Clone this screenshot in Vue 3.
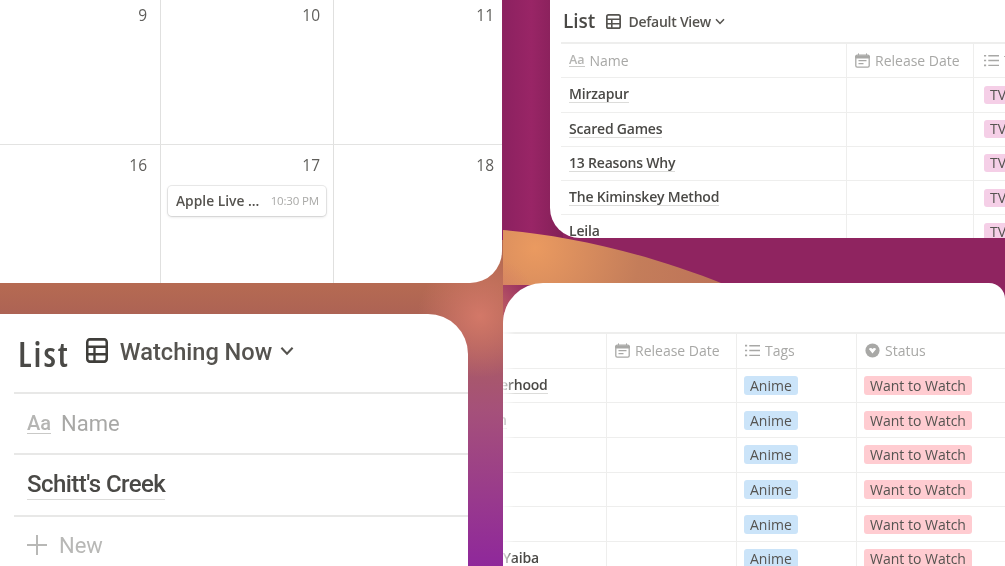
<script setup>
const weeks = [
  [{ n: 9 }, { n: 10 }, { n: 11 }],
  [{ n: 16 }, { n: 17, event: { title: 'Apple Live ...', time: '10:30 PM' } }, { n: 18 }]
]
const shows = ['Mirzapur', 'Scared Games', '13 Reasons Why', 'The Kiminskey Method', 'Leila']
const anime = [
  { name: 'Fullmetal Alchemist: Brotherhood', shift: 0 },
  { name: 'Tengen Toppa Gurren Lagann', shift: -14 },
  { name: 'Death Note', shift: 0 },
  { name: 'One Piece', shift: 0 },
  { name: 'Naruto', shift: 0 },
  { name: 'Demon Slayer: Kimetsu no Yaiba', shift: 0 }
]
</script>

<template>
  <div class="canvas">
    <svg class="sprite" width="0" height="0">
      <symbol id="i-table" viewBox="0 0 14 14" preserveAspectRatio="none">
        <rect x="0.8" y="0.8" width="12.4" height="12.4" rx="1.6" fill="none" stroke="currentColor" stroke-width="1.6" />
        <path d="M0.8 4.9H13.2M0.8 9.1H13.2M5.4 4.9V13.2" fill="none" stroke="currentColor" stroke-width="1.5" />
      </symbol>
      <symbol id="i-chev" viewBox="0 0 10 7">
        <path d="M1 1.2L5 5.4L9 1.2" fill="none" stroke="currentColor" stroke-width="1.5" />
      </symbol>
      <symbol id="i-cal" viewBox="0 0 15 15">
        <rect x="0.8" y="2.2" width="13.4" height="12" rx="1.4" fill="none" stroke="currentColor" stroke-width="1.3" />
        <path d="M0.8 3H14.2V5H0.8ZM3.5 0.4V2.5M11.5 0.4V2.5" fill="currentColor" stroke="currentColor" stroke-width="1" />
        <path d="M3.5 7.6H11.5M3.5 10.6H8.5" fill="none" stroke="currentColor" stroke-width="1.2" />
      </symbol>
      <symbol id="i-list" viewBox="0 0 14 12">
        <path d="M4 1.5H14M4 6H14M4 10.5H14" fill="none" stroke="currentColor" stroke-width="1.3" />
        <path d="M0 1.5H2M0 6H2M0 10.5H2" fill="none" stroke="currentColor" stroke-width="1.5" />
      </symbol>
      <symbol id="i-status" viewBox="0 0 14 14">
        <circle cx="7" cy="7" r="6.6" fill="currentColor" />
        <path d="M3.6 5.6C4.6 4.4 6.2 4.6 7 5.5C7.8 4.6 9.4 4.4 10.4 5.6L7 9.8Z" fill="#fff" />
      </symbol>
      <symbol id="i-plus" viewBox="0 0 20 20">
        <path d="M10 0V20M0 10H20" fill="none" stroke="currentColor" stroke-width="2" />
      </symbol>
    </svg>

    <svg class="backdrop" viewBox="0 0 1005 566" width="1005" height="566">
      <defs>
        <linearGradient id="warm" gradientUnits="userSpaceOnUse" x1="0" y1="285" x2="0" y2="566">
          <stop offset="0" stop-color="#b56a52" />
          <stop offset="0.1" stop-color="#ad6354" />
          <stop offset="0.45" stop-color="#a5507a" />
          <stop offset="1" stop-color="#8f289b" />
        </linearGradient>
        <linearGradient id="plum" gradientUnits="userSpaceOnUse" x1="503" y1="0" x2="560" y2="0">
          <stop offset="0" stop-color="#8c2160" />
          <stop offset="0.5" stop-color="#992566" />
          <stop offset="1" stop-color="#842058" />
        </linearGradient>
        <radialGradient id="amber" gradientUnits="userSpaceOnUse" cx="535" cy="248" r="210">
          <stop offset="0" stop-color="#ea9a60" />
          <stop offset="0.5" stop-color="#c47d5a" />
          <stop offset="1" stop-color="#bb7058" />
        </radialGradient>
        <radialGradient id="glow" gradientUnits="userSpaceOnUse" cx="480" cy="316" r="62">
          <stop offset="0" stop-color="#d37868" />
          <stop offset="1" stop-color="#d37868" stop-opacity="0" />
        </radialGradient>
      </defs>
      <rect width="1005" height="566" fill="#8f2460" />
      <rect x="503" width="60" height="240" fill="url(#plum)" />
      <rect y="240" width="503" height="326" fill="url(#warm)" />
      <path d="M503 230C560 235 640 250 726 285H503Z" fill="url(#amber)" />
      <rect x="400" y="240" width="150" height="150" fill="url(#glow)" />
    </svg>

    <section class="window calendar">
      <div class="weeks">
        <div v-for="(week, i) in weeks" :key="i" class="week">
          <div v-for="day in week" :key="day.n" class="day">
            <span class="num">{{ day.n }}</span>
            <div v-if="day.event" class="event">
              <span class="ev-title">{{ day.event.title }}</span>
              <span class="ev-time">{{ day.event.time }}</span>
            </div>
          </div>
        </div>
      </div>
    </section>

    <section class="window shows">
      <header class="bar">
        <h2 class="title">List</h2>
        <svg class="tbl-ico"><use href="#i-table" /></svg>
        <span class="view">Default View</span>
        <svg class="chev"><use href="#i-chev" /></svg>
      </header>
      <div class="table">
        <div class="row head">
          <div class="cell"><span class="aa">Aa</span>Name</div>
          <div class="cell"><svg class="ico"><use href="#i-cal" /></svg>Release Date</div>
          <div class="cell"><svg class="ico"><use href="#i-list" /></svg>Tags</div>
        </div>
        <div v-for="s in shows" :key="s" class="row">
          <div class="cell"><span class="name">{{ s }}</span></div>
          <div class="cell"></div>
          <div class="cell"><span class="pill pink">TV Series</span></div>
        </div>
      </div>
    </section>

    <section class="window watching">
      <header class="bar">
        <h2 class="title">List</h2>
        <svg class="tbl-ico"><use href="#i-table" /></svg>
        <span class="view">Watching Now</span>
        <svg class="chev"><use href="#i-chev" /></svg>
      </header>
      <div class="table">
        <div class="row head">
          <div class="cell"><span class="aa">Aa</span>Name</div>
        </div>
        <div class="row">
          <div class="cell"><span class="name">Schitt's Creek</span></div>
        </div>
        <div class="new">
          <svg class="plus"><use href="#i-plus" /></svg>New
        </div>
      </div>
    </section>

    <section class="window anime">
      <div class="spacer"></div>
      <div class="table">
        <div class="row head">
          <div class="cell"><span class="aa">Aa</span>Name</div>
          <div class="cell"><svg class="ico"><use href="#i-cal" /></svg>Release Date</div>
          <div class="cell"><svg class="ico"><use href="#i-list" /></svg>Tags</div>
          <div class="cell"><svg class="ico"><use href="#i-status" /></svg>Status</div>
        </div>
        <div v-for="a in anime" :key="a.name" class="row">
          <div class="cell"><span class="name" :style="{ marginLeft: a.shift + 'px' }">{{ a.name }}</span></div>
          <div class="cell"></div>
          <div class="cell"><span class="pill blue">Anime</span></div>
          <div class="cell"><span class="pill red">Want to Watch</span></div>
        </div>
      </div>
    </section>
  </div>
</template>

<style scoped>
.canvas {
  position: relative;
  width: 1005px;
  height: 566px;
  overflow: hidden;
  font-family: "Open Sans", "Noto Sans", sans-serif;
  color: #37352f;
}
.sprite { position: absolute; }
.backdrop { position: absolute; inset: 0; display: block; }

.window {
  position: absolute;
  background: #fff;
  overflow: hidden;
  filter: blur(0.5px);
}
.calendar { left: 0; top: 0; width: 502px; height: 283px; border-bottom-right-radius: 32px; }
.shows { left: 550px; top: 0; width: 455px; height: 238px; border-bottom-left-radius: 30px; }
.watching { left: 0; top: 314px; width: 468px; height: 252px; border-top-right-radius: 40px; font-family: Roboto, "Open Sans", sans-serif; }
.anime { left: 503px; top: 283px; width: 502px; height: 283px; border-top-left-radius: 40px; border-top-right-radius: 16px; }
.anime::before {
  content: "";
  position: absolute;
  left: 0;
  top: 0;
  bottom: 0;
  width: 12px;
  z-index: 1;
  background: linear-gradient(to right, rgba(255, 255, 255, 0.85), rgba(255, 255, 255, 0));
}

/* calendar */
.weeks { margin: -5px 0 0 -12px; }
.week {
  display: grid;
  grid-template-columns: repeat(3, 173px);
  height: 149px;
  border-bottom: 1px solid #e3e3e2;
}
.week + .week { height: 160px; }
.day {
  display: flex;
  flex-direction: column;
  border-right: 1px solid #e0e0df;
  padding: 8px 13px 0 7px;
  box-sizing: border-box;
}
.day:last-child { border-right: 0; }
.num {
  align-self: flex-end;
  font-size: 15.5px;
  line-height: 24px;
  color: #5f5e5b;
}
.event {
  display: flex;
  align-items: center;
  justify-content: space-between;
  height: 30px;
  margin: 8.5px -6px 0 0;
  padding: 0 7px 0 8px;
  border-radius: 4px;
  box-shadow: 0 0 0 1px rgba(15, 15, 15, 0.08), 0 1px 3px rgba(15, 15, 15, 0.14);
}
.ev-title { font-size: 13.8px; font-weight: 600; color: #55534f; white-space: nowrap; }
.ev-time { font-size: 11.5px; color: #a9a9a7; white-space: nowrap; letter-spacing: -0.15px; }

/* shared header */
.bar { display: flex; align-items: center; }
.title { margin: 0; font-weight: 600; color: #4a4946; }
.tbl-ico, .chev { flex: none; }
.view { font-weight: 600; white-space: nowrap; color: #55534f; }

/* shared table */
.row { display: grid; box-sizing: border-box; border-bottom: 1.5px solid #eeeeed; }
.cell {
  display: flex;
  align-items: center;
  box-sizing: border-box;
  min-width: 0;
  overflow: hidden;
  white-space: nowrap;
  border-right: 1px solid #eeeeed;
}
.cell:last-child { border-right: 0; }
.head { color: #a8a8a6; }
.aa {
  border-bottom: 1.5px solid #c9c9c7;
  line-height: 1;
  font-weight: 600;
  color: #b5b5b3;
}
.name {
  font-weight: 600;
  color: #4a4946;
  border-bottom: 1px solid #dcdcda;
  line-height: 1.15;
  letter-spacing: -0.2px;
}
.pill { padding: 0 6px; border-radius: 3px; color: #555350; }
.pink { background: #f5cfe7; }
.blue { background: #cbe4f9; }
.red { background: #ffccd1; }
.ico { flex: none; color: #a8a8a6; }

/* shows + anime sizing */
.shows .bar { height: 42px; padding-left: 13px; }
.shows .title { font-size: 19px; }
.shows .tbl-ico { width: 15px; height: 15px; margin-left: 11px; color: #55534f; }
.shows .view { font-size: 14px; letter-spacing: -0.25px; margin-left: 7px; }
.shows .chev { width: 10px; height: 7px; margin-left: 4px; color: #55534f; }
.shows .table { margin-left: 11px; border-top: 2px solid #eeeeed; font-size: 14px; }
.shows .row { grid-template-columns: 286px 127px 200px; height: 34.25px; }
.shows .cell { padding-left: 8px; }
.shows .cell:nth-child(3) { padding-left: 10px; }
.shows .head .aa { font-size: 12.5px; margin-right: 5px; }
.shows .head .ico { width: 15px; height: 15px; margin-right: 5px; }
.shows .pill { font-size: 14px; line-height: 18px; }

.anime .spacer { height: 49px; }
.anime .table { margin-left: -185px; border-top: 2px solid #eeeeed; font-size: 14px; }
.anime .row { grid-template-columns: 289px 130px 120px 160px; height: 34.7px; }
.anime .cell { padding-left: 8px; }
.anime .head .aa { margin-right: 5px; font-size: 12.5px; }
.anime .head .ico { width: 15px; height: 15px; margin-right: 5px; }
.anime .pill { font-size: 14px; line-height: 19px; }
.anime .row .cell:nth-child(n + 3) .pill { margin-left: -1px; }

/* watching sizing */
.watching .bar { height: 78px; padding-left: 18px; box-sizing: border-box; }
.watching .title {
  font-family: "Open Sans", sans-serif;
  font-stretch: 75%;
  font-size: 35px;
  letter-spacing: 2px;
  font-weight: 600;
}
.watching .tbl-ico { width: 22px; height: 25px; margin: -6px 0 0 16px; color: #3f3e3a; }
.watching .view { font-size: 23.6px; font-weight: 500; margin: -3px 0 0 12px; }
.watching .chev { width: 14px; height: 10px; margin: -4px 0 0 8px; color: #55534f; }
.watching .table { margin-left: 14px; border-top: 2px solid #e8e8e7; font-size: 22px; }
.watching .row { height: 60.5px; border-bottom-width: 2px; border-bottom-color: #e8e8e7; }
.watching .row + .row { height: 62.5px; }
.watching .cell { padding-left: 13px; }
.watching .head .aa { font-size: 20px; font-weight: 500; margin-right: 10px; }
.watching .name { font-weight: 500; font-size: 24px; letter-spacing: -0.55px; margin-top: 2px; }
.new { display: flex; align-items: center; height: 56px; padding-left: 13px; color: #b8b8b6; }
.plus { width: 20px; height: 20px; margin-right: 12px; color: #b8b8b6; }
</style>
